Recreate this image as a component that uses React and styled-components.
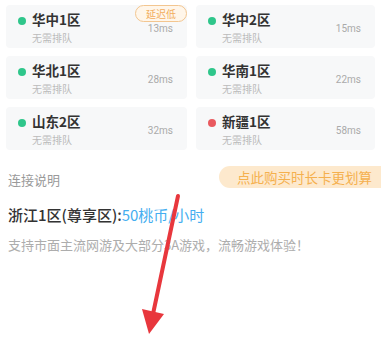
import React from "react"
import styled, { createGlobalStyle } from "styled-components"

//Styles
const GlobalStyle = createGlobalStyle`
  html, body {
    margin: 0;
    padding: 0;
    background: #fff;
  }
  body {
    font-family: "Noto Sans CJK SC", "Noto Sans", sans-serif;
  }
`
const Page = styled.div`
  position: relative;
  width: 381px;
  height: 339px;
  overflow: hidden;
  background: #fff;
`
const Grid = styled.div`
  display: grid;
  grid-template-columns: 181px 179px;
  column-gap: 9px;
  row-gap: 8px;
  padding: 5px 6px 0 6px;
`
const Card = styled.div`
  position: relative;
  display: flex;
  align-items: center;
  height: 43px;
  padding: 0 14px 0 12px;
  box-sizing: border-box;
  background: #f7f8f9;
  border-radius: 4px;
`
const Dot = styled.span`
  width: 8px;
  height: 8px;
  border-radius: 50%;
  flex: none;
  margin: -12px 6px 0 0;
  background: ${props => (props.bad ? "#e95a5f" : "#2fc68b")};
`
const Info = styled.div`
  display: flex;
  flex-direction: column;
  padding-top: 2px;
`
const Name = styled.div`
  font-size: 13.5px;
  line-height: 15px;
  font-weight: 700;
  color: #333;
`
const Queue = styled.div`
  margin-top: 4px;
  font-size: 10px;
  line-height: 13px;
  color: #bbb;
`
const Ping = styled.div`
  margin-left: auto;
  margin-top: 4px;
  font-family: "Roboto", sans-serif;
  font-size: 10px;
  color: #aaa;
`
const Badge = styled.span`
  position: absolute;
  top: 0;
  right: 0;
  height: 15px;
  padding: 0 10px;
  border: 1px solid #f3c690;
  border-radius: 9px;
  background: #fff6ea;
  color: #f2ad5c;
  font-size: 10px;
  line-height: 15px;
`
const Section = styled.div`
  padding: 15px 0 0 8px;
`
const Head = styled.div`
  display: flex;
  justify-content: space-between;
  align-items: center;
`
const Label = styled.div`
  font-size: 13px;
  color: #9a9a9a;
  margin-top: 5px;
`
const Promo = styled.div`
  height: 22px;
  padding: 0 9px 0 18px;
  border-radius: 11px 0 0 11px;
  background: #fde9cd;
  color: #f5b04e;
  font-size: 13.5px;
  line-height: 22px;
  white-space: nowrap;
`
const Price = styled.div`
  margin-top: 15px;
  font-size: 15px;
  font-weight: 500;
  color: #333;
  span {
    color: #45aef0;
    font-weight: 400;
  }
`
const Desc = styled.div`
  margin-top: 10px;
  font-size: 13px;
  color: #adadad;
`
const Arrow = styled.svg`
  position: absolute;
  top: 0;
  left: 0;
  pointer-events: none;
`

const servers = [
  { name: "华中1区", ping: "13ms", badge: "延迟低" },
  { name: "华中2区", ping: "15ms" },
  { name: "华北1区", ping: "28ms" },
  { name: "华南1区", ping: "22ms" },
  { name: "山东2区", ping: "32ms" },
  { name: "新疆1区", ping: "58ms", bad: true },
]

const App = () => {
  return (
    <Page>
      <GlobalStyle />
      <Grid>
        {servers.map(s => (
          <Card key={s.name}>
            <Dot bad={s.bad} />
            <Info>
              <Name>{s.name}</Name>
              <Queue>无需排队</Queue>
            </Info>
            <Ping>{s.ping}</Ping>
            {s.badge && <Badge>{s.badge}</Badge>}
          </Card>
        ))}
      </Grid>
      <Section>
        <Head>
          <Label>连接说明</Label>
          <Promo>点此购买时长卡更划算</Promo>
        </Head>
        <Price>
          浙江1区(尊享区):<span>50桃币/小时</span>
        </Price>
        <Desc>支持市面主流网游及大部分3A游戏，流畅游戏体验！</Desc>
      </Section>
      <Arrow width="381" height="339" viewBox="0 0 381 339">
        <line
          x1="178"
          y1="196"
          x2="153"
          y2="314"
          stroke="#e8373d"
          strokeWidth="4"
          strokeLinecap="round"
        />
        <polygon points="142,309 164,314 149,334" fill="#e8373d" />
      </Arrow>
    </Page>
  )
}

export default App
